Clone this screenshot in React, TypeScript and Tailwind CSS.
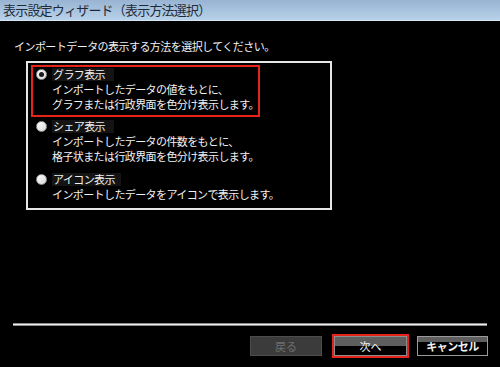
const font = { fontFamily: '"Noto Sans CJK JP", "Noto Sans", sans-serif' };

interface OptionProps {
  label: string;
  lines: string[];
  checked?: boolean;
  highlighted?: boolean;
  labelWidth: string;
}

const Radio = ({ checked }: { checked?: boolean }) => (
  <span className="flex h-[11px] w-[11px] shrink-0 items-center justify-center rounded-full border border-[#9a9a9a] bg-gradient-to-br from-white to-[#d8d8d8]">
    {checked && <span className="h-[5px] w-[5px] rounded-full bg-[#1a1a1a]" />}
  </span>
);

const Option = ({ label, lines, checked, highlighted, labelWidth }: OptionProps) => (
  <div
    className={
      highlighted
        ? "w-[229px] border-2 border-[#e5231b] pb-[3px] pl-[3px]"
        : "w-[229px] border-2 border-transparent pb-[3px] pl-[3px]"
    }
  >
    <div className="flex h-[15px] items-center gap-[5px]">
      <Radio checked={checked} />
      <span className={`flex h-[13px] items-center bg-[#141414] pl-[1px] text-[11px] tracking-[-0.6px] text-[#f2f2f2] ${labelWidth}`}>
        {label}
      </span>
    </div>
    <div className="pl-[16px]">
      {lines.map((l) => (
        <div key={l} className="h-[15px] whitespace-nowrap text-[11px] leading-[15px] tracking-[-0.6px] text-[#f2f2f2]">
          {l}
        </div>
      ))}
    </div>
  </div>
);

export default function App() {
  return (
    <div className="flex h-[367px] w-[500px] flex-col overflow-hidden bg-black" style={font}>
      {/* title bar */}
      <div className="flex h-[21px] shrink-0 items-center border-b border-[#d6e6f5] bg-gradient-to-b from-[#98b4d2] to-[#b8d2ea] pl-[3px]">
        <span className="text-[13px] tracking-[-0.8px] text-[#1e2a38]">表示設定ウィザード（表示方法選択）</span>
      </div>

      <div className="flex flex-1 flex-col">
        <div className="mt-[18px] h-[15px] pl-[14px] text-[11px] leading-[15px] tracking-[-0.55px] text-[#f2f2f2]">
          インポートデータの表示する方法を選択してください。
        </div>

        <div className="ml-[26px] mt-[7px] flex h-[149px] w-[306px] flex-col border-2 border-[#e6e6e6] pl-[3px] pt-[2px]">
          <Option
            highlighted
            checked
            label="グラフ表示"
            labelWidth="w-[62px]"
            lines={["インポートしたデータの値をもとに、", "グラフまたは行政界面を色分け表示します。"]}
          />
          <Option
            label="シェア表示"
            labelWidth="w-[62px]"
            lines={["インポートしたデータの件数をもとに、", "格子状または行政界面を色分け表示します。"]}
          />
          <div className="mt-[1px]">
            <Option label="アイコン表示" labelWidth="w-[69px]" lines={["インポートしたデータをアイコンで表示します。"]} />
          </div>
        </div>

        <div className="mx-[13px] mt-[113px] h-[3px] border-y border-[#8a8a8a] bg-[#f0f0f0]" />

        <div className="mt-[8px] flex items-center justify-end pr-[12px]">
          <button
            disabled
            className="flex h-[20px] w-[72px] items-center justify-center border border-[#4d4d4d] bg-[#3b3b3b] text-[11px] text-[#6e6e6e]"
          >
            戻る
          </button>
          <div className="ml-[10px] border-2 border-[#e5231b]">
            <button className="flex h-[20px] w-[73px] items-center justify-center border border-[#8c8c8c] bg-gradient-to-b from-[#5e5e5e] from-50% to-black to-50% text-[11px] text-[#f2f2f2]">
              次へ
            </button>
          </div>
          <button className="ml-[8px] flex h-[20px] w-[71px] items-center justify-center border border-[#9a9a9a] bg-gradient-to-b from-[#5e5e5e] from-25% to-black to-25% text-[11px] font-bold tracking-[-0.5px] text-[#f2f2f2]">
            キャンセル
          </button>
        </div>
      </div>
    </div>
  );
}
